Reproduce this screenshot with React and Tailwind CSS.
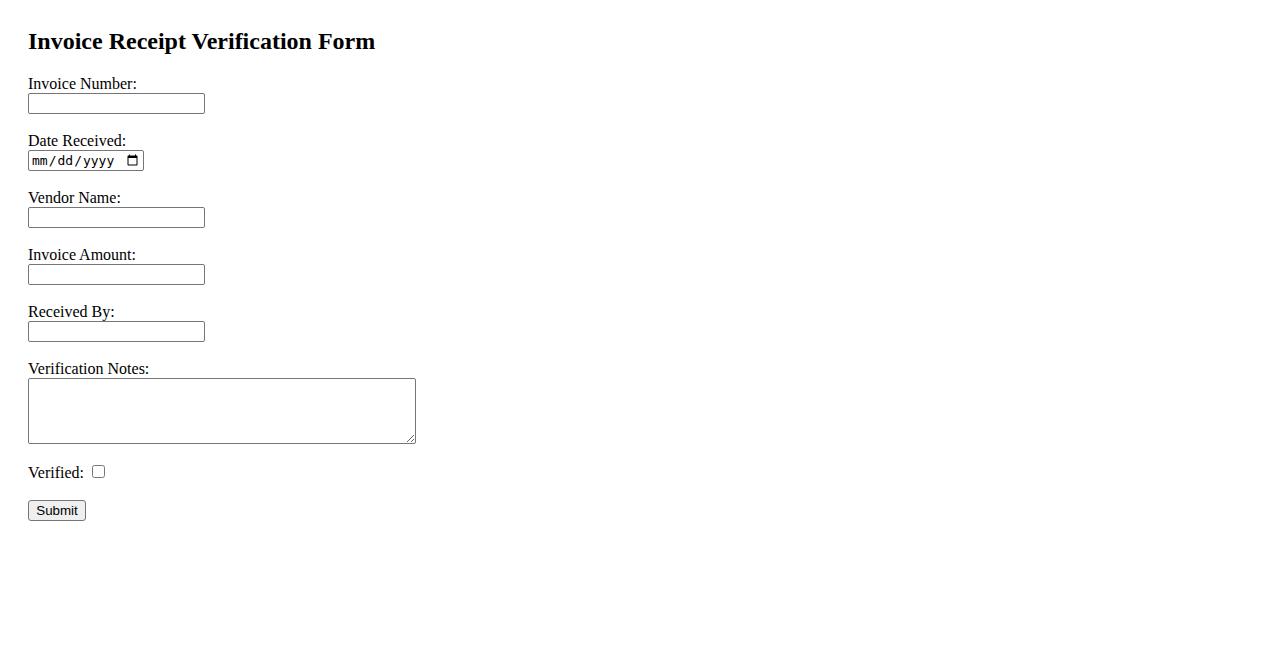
import React from 'react';

const fields = [
  { label: 'Invoice Number:', type: 'text' },
  { label: 'Date Received:', type: 'date' },
  { label: 'Vendor Name:', type: 'text' },
  { label: 'Invoice Amount:', type: 'text' },
  { label: 'Received By:', type: 'text' },
];

export default function App() {
  return (
    <div className="min-h-screen w-full bg-white text-black px-[28px] pt-[28px] font-['Liberation_Serif','Times_New_Roman',serif] text-[16px]">
      <h2 className="text-[24px] font-bold leading-[27px] mb-[20px]">Invoice Receipt Verification Form</h2>

      <form className="flex flex-col items-start" onSubmit={(e) => e.preventDefault()}>
        {fields.map((f) => (
          <div key={f.label} className="flex flex-col items-start mb-[18px]">
            <label className="leading-[18px]">{f.label}</label>
            {f.type === 'date' ? (
              <input
                type="date"
                className="w-[116px] h-[21px] border border-[#767676] rounded-[2px] px-[2px] py-[1px] text-[13px] font-['DejaVu_Sans_Mono',monospace] bg-white"
              />
            ) : (
              <input
                type="text"
                className="w-[177px] h-[21px] border border-[#767676] rounded-[2px] px-[2px] py-[1px] text-[13.33px] font-['Liberation_Sans',Arial,sans-serif] bg-white"
              />
            )}
          </div>
        ))}

        {/* notes */}
        <div className="flex flex-col items-start">
          <label className="leading-[18px]">Verification Notes:</label>
          <textarea className="w-[388px] h-[66px] border border-[#767676] rounded-[2px] px-[2px] py-[1px] text-[13.33px] font-['Liberation_Mono',monospace] bg-white" />
        </div>

        <div className="flex items-start h-[19px] mt-[20px]">
          <label className="leading-[18px]">Verified:</label>
          <input type="checkbox" className="w-[13px] h-[13px] mt-[1px] ml-[8px]" />
        </div>

        <button
          type="submit"
          className="mt-[17px] w-[58px] h-[21px] border border-[#767676] bg-[#efefef] rounded-[3px] text-[13.33px] leading-none font-['Liberation_Sans',Arial,sans-serif] text-black"
        >
          Submit
        </button>
      </form>
    </div>
  );
}
